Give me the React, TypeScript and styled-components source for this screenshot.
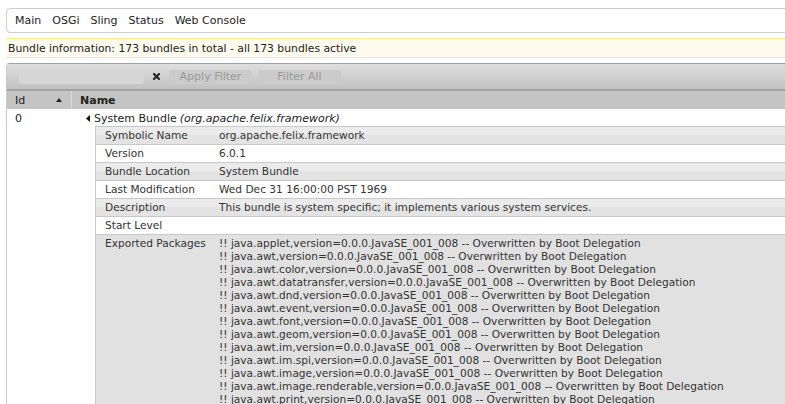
import React from "react";
import styled, { createGlobalStyle } from "styled-components";

const GlobalStyle = createGlobalStyle`
  html, body {
    margin: 0;
    padding: 0;
    background: #fff;
    overflow: hidden;
  }
  body {
    font-family: "DejaVu Sans", Verdana, sans-serif;
    font-size: 10px;
    color: #222;
  }
`;

const Page = styled.div`
  width: 900px;
  padding: 8px 0 0 6px;
  display: flex;
  flex-direction: column;
  gap: 5px;
`;

// navigation
const Nav = styled.nav`
  height: 23px;
  border: 1px solid #ccc;
  border-radius: 4px;
  display: flex;
  align-items: center;
  padding-left: 8px;
`;

const NavItem = styled.a`
  font-size: 11px;
  color: #222;
  margin-right: 11px;
`;

// status line
const Info = styled.div`
  height: 18px;
  border-top: 1px solid #fbe98a;
  border-bottom: 1px solid #f5e89c;
  background: #fdfaee;
  display: flex;
  align-items: center;
  padding-left: 2px;
  font-size: 10.8px;
`;

// bundle table
const Table = styled.div`
  border-top: 1px solid #a0a0a0;
  border-left: 1px solid #c8c8c8;
  border-top-left-radius: 4px;
`;

const Toolbar = styled.div`
  height: 25px;
  background: linear-gradient(#dedede, #c2c2c2);
  border-bottom: 2px solid #a2a2a2;
  display: flex;
  align-items: center;
  padding-left: 12px;
`;

const FilterInput = styled.div`
  width: 125px;
  height: 14px;
  border-radius: 3px;
  background: #d6d6d6;
`;

const ClearIcon = styled.svg`
  width: 7px;
  height: 7px;
  margin: 0 9px;
`;

const FilterButton = styled.div`
  width: 83px;
  height: 14px;
  border-radius: 3px;
  background: #cbcbcb;
  color: #9a9a9a;
  font-size: 11px;
  display: flex;
  align-items: center;
  justify-content: center;
  margin-right: 6px;
`;

const HeadRow = styled.div`
  height: 18px;
  background: #c4c4c4;
  display: flex;
  font-size: 11px;
`;

const HeadCell = styled.div<{ $w?: number; $bold?: boolean }>`
  width: ${(p) => (p.$w ? `${p.$w}px` : "auto")};
  flex: ${(p) => (p.$w ? "none" : "1")};
  display: flex;
  align-items: center;
  justify-content: space-between;
  padding: 0 9px 0 8px;
  box-sizing: border-box;
  font-weight: ${(p) => (p.$bold ? "bold" : "normal")};
  color: #222;
  & + & {
    border-left: 1px solid #dcdcdc;
  }
`;

const SortArrow = styled.svg`
  width: 6px;
  height: 4px;
`;

const BodyRow = styled.div`
  display: flex;
  padding-top: 1px;
`;

const IdCell = styled.div`
  width: 64px;
  padding: 2px 0 0 8px;
  box-sizing: border-box;
  font-size: 11px;
  height: 16px;
`;

const NameCell = styled.div`
  flex: 1;
  padding-left: 15px;
`;

const Title = styled.div`
  height: 16px;
  display: flex;
  align-items: center;
  font-size: 11px;
  gap: 4px;
  i {
    margin-left: 3px;
  }
`;

const CollapseIcon = styled.svg`
  width: 4px;
  height: 7px;
`;

const Details = styled.div`
  margin-left: 9px;
  border-left: 1px solid #c8c8c8;
  border-top: 1px solid #c8c8c8;
`;

const DetailRow = styled.div<{ $shade?: "stripe" | "flat" }>`
  display: flex;
  min-height: 17px;
  border-bottom: 1px solid #c8c8c8;
  font-size: 10.6px;
  color: #333;
  background: ${(p) =>
    p.$shade === "stripe"
      ? "linear-gradient(#ebebeb 50%, #e3e3e3 50%)"
      : p.$shade === "flat"
      ? "#e1e1e1"
      : "#fff"};
`;

const Label = styled.div`
  width: 114px;
  flex: none;
  padding: 2px 0 0 9px;
`;

const Value = styled.div`
  flex: 1;
  padding-top: 2px;
`;

const PkgLine = styled.div`
  line-height: 13px;
  white-space: nowrap;
`;

const details: [string, string][] = [
  ["Symbolic Name", "org.apache.felix.framework"],
  ["Version", "6.0.1"],
  ["Bundle Location", "System Bundle"],
  ["Last Modification", "Wed Dec 31 16:00:00 PST 1969"],
  ["Description", "This bundle is system specific; it implements various system services."],
  ["Start Level", ""],
];

const packages = [
  "java.applet",
  "java.awt",
  "java.awt.color",
  "java.awt.datatransfer",
  "java.awt.dnd",
  "java.awt.event",
  "java.awt.font",
  "java.awt.geom",
  "java.awt.im",
  "java.awt.im.spi",
  "java.awt.image",
  "java.awt.image.renderable",
  "java.awt.print",
];

export default function App() {
  return (
    <>
      <GlobalStyle />
      <Page>
        <Nav>
          {["Main", "OSGi", "Sling", "Status", "Web Console"].map((n) => (
            <NavItem key={n}>{n}</NavItem>
          ))}
        </Nav>
        <Info>Bundle information: 173 bundles in total - all 173 bundles active</Info>
        <Table>
          <Toolbar>
            <FilterInput />
            <ClearIcon viewBox="0 0 7 7">
              <path d="M1 1L6 6M6 1L1 6" stroke="#222" strokeWidth="2" strokeLinecap="square" />
            </ClearIcon>
            <FilterButton>Apply Filter</FilterButton>
            <FilterButton>Filter All</FilterButton>
          </Toolbar>
          <HeadRow>
            <HeadCell $w={64}>
              Id
              <SortArrow viewBox="0 0 6 4">
                <path d="M0 4L3 0L6 4Z" fill="#222" />
              </SortArrow>
            </HeadCell>
            <HeadCell $bold>Name</HeadCell>
          </HeadRow>
          <BodyRow>
            <IdCell>0</IdCell>
            <NameCell>
              <Title>
                <CollapseIcon viewBox="0 0 4 7">
                  <path d="M4 0L0 3.5L4 7Z" fill="#111" />
                </CollapseIcon>
                <span>
                  System Bundle<i>(org.apache.felix.framework)</i>
                </span>
              </Title>
              <Details>
                {details.map(([k, v], i) => (
                  <DetailRow key={k} $shade={i % 2 === 0 ? "stripe" : undefined}>
                    <Label>{k}</Label>
                    <Value>{v}</Value>
                  </DetailRow>
                ))}
                <DetailRow $shade="flat">
                  <Label>Exported Packages</Label>
                  <Value>
                    {packages.map((p) => (
                      <PkgLine key={p}>
                        !! {p},version=0.0.0.JavaSE_001_008 -- Overwritten by Boot Delegation
                      </PkgLine>
                    ))}
                  </Value>
                </DetailRow>
              </Details>
            </NameCell>
          </BodyRow>
        </Table>
      </Page>
    </>
  );
}
